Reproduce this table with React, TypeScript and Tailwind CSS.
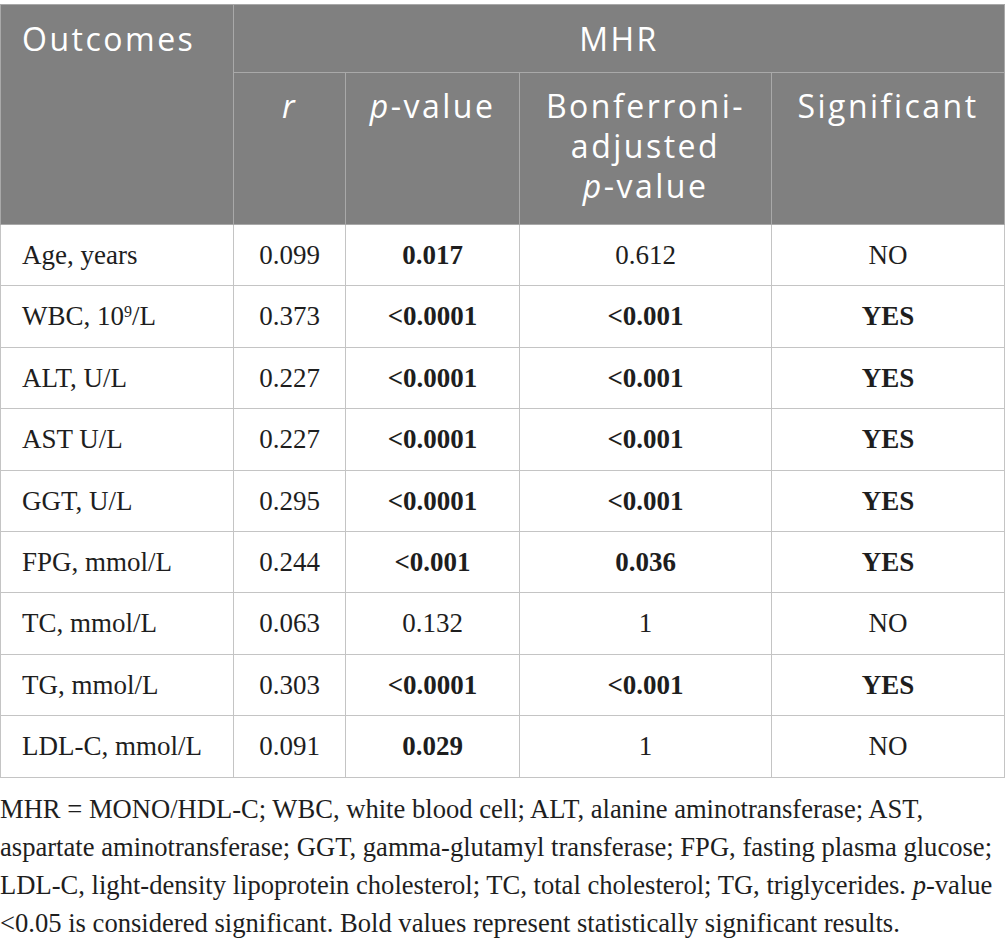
const rows = [
  { name: 'Age, years', r: '0.099', p: '0.017', pb: true, adj: '0.612', ab: false, sig: 'NO' },
  { name: 'WBC, 10', sup: '9', unit: '/L', r: '0.373', p: '<0.0001', pb: true, adj: '<0.001', ab: true, sig: 'YES' },
  { name: 'ALT, U/L', r: '0.227', p: '<0.0001', pb: true, adj: '<0.001', ab: true, sig: 'YES' },
  { name: 'AST U/L', r: '0.227', p: '<0.0001', pb: true, adj: '<0.001', ab: true, sig: 'YES' },
  { name: 'GGT, U/L', r: '0.295', p: '<0.0001', pb: true, adj: '<0.001', ab: true, sig: 'YES' },
  { name: 'FPG, mmol/L', r: '0.244', p: '<0.001', pb: true, adj: '0.036', ab: true, sig: 'YES' },
  { name: 'TC, mmol/L', r: '0.063', p: '0.132', pb: false, adj: '1', ab: false, sig: 'NO' },
  { name: 'TG, mmol/L', r: '0.303', p: '<0.0001', pb: true, adj: '<0.001', ab: true, sig: 'YES' },
  { name: 'LDL-C, mmol/L', r: '0.091', p: '0.029', pb: true, adj: '1', ab: false, sig: 'NO' },
]

const head = "border border-[#a9a9a9] bg-[#808080] align-top text-white font-normal"
const cell = "border border-[#c4c4c4] h-[61.4px] text-center align-middle"

export default function App() {
  return (
    <div className="w-[1005px] bg-white pt-1 text-[#1e1e1e]">
      <table className="w-[1004px] table-fixed border-collapse">
        <colgroup>
          <col className="w-[233px]" />
          <col className="w-[112px]" />
          <col className="w-[174px]" />
          <col className="w-[252px]" />
          <col className="w-[233px]" />
        </colgroup>
        <thead className="font-['Open_Sans',sans-serif] text-[32px] leading-[40px] tracking-[2.5px]">
          <tr className="h-[68px]">
            <th rowSpan={2} className={`${head} pl-[21px] pt-[14px] text-left`}>Outcomes</th>
            <th colSpan={4} className={`${head} pt-[14px]`}>MHR</th>
          </tr>
          <tr className="h-[152px]">
            <th className={`${head} pt-[13px]`}><i>r</i></th>
            <th className={`${head} pt-[13px]`}><i>p</i>-value</th>
            <th className={`${head} pt-[13px]`}>Bonferroni-<br />adjusted<br /><i>p</i>-value</th>
            <th className={`${head} pt-[13px]`}>Significant</th>
          </tr>
        </thead>
        <tbody className="font-['Liberation_Serif',serif] text-[27px]">
          {rows.map((row) => (
            <tr key={row.name + row.r}>
              <td className={`${cell} pl-[21px] text-left`}>
                {row.name}
                {row.sup && <sup className="text-[16px]">{row.sup}</sup>}
                {row.unit}
              </td>
              <td className={cell}>{row.r}</td>
              <td className={`${cell} ${row.pb ? 'font-bold' : ''}`}>{row.p}</td>
              <td className={`${cell} ${row.ab ? 'font-bold' : ''}`}>{row.adj}</td>
              <td className={`${cell} ${row.sig === 'YES' ? 'font-bold' : ''}`}>{row.sig}</td>
            </tr>
          ))}
        </tbody>
      </table>
      <p className="mt-[12px] whitespace-nowrap font-['Liberation_Serif',serif] text-[26.6px] leading-[38px]">
        MHR = MONO/HDL-C; WBC, white blood cell; ALT, alanine aminotransferase; AST,<br />
        aspartate aminotransferase; GGT, gamma-glutamyl transferase; FPG, fasting plasma glucose;<br />
        LDL-C, light-density lipoprotein cholesterol; TC, total cholesterol; TG, triglycerides. <i>p</i>-value<br />
        &lt;0.05 is considered significant. Bold values represent statistically significant results.
      </p>
    </div>
  )
}
